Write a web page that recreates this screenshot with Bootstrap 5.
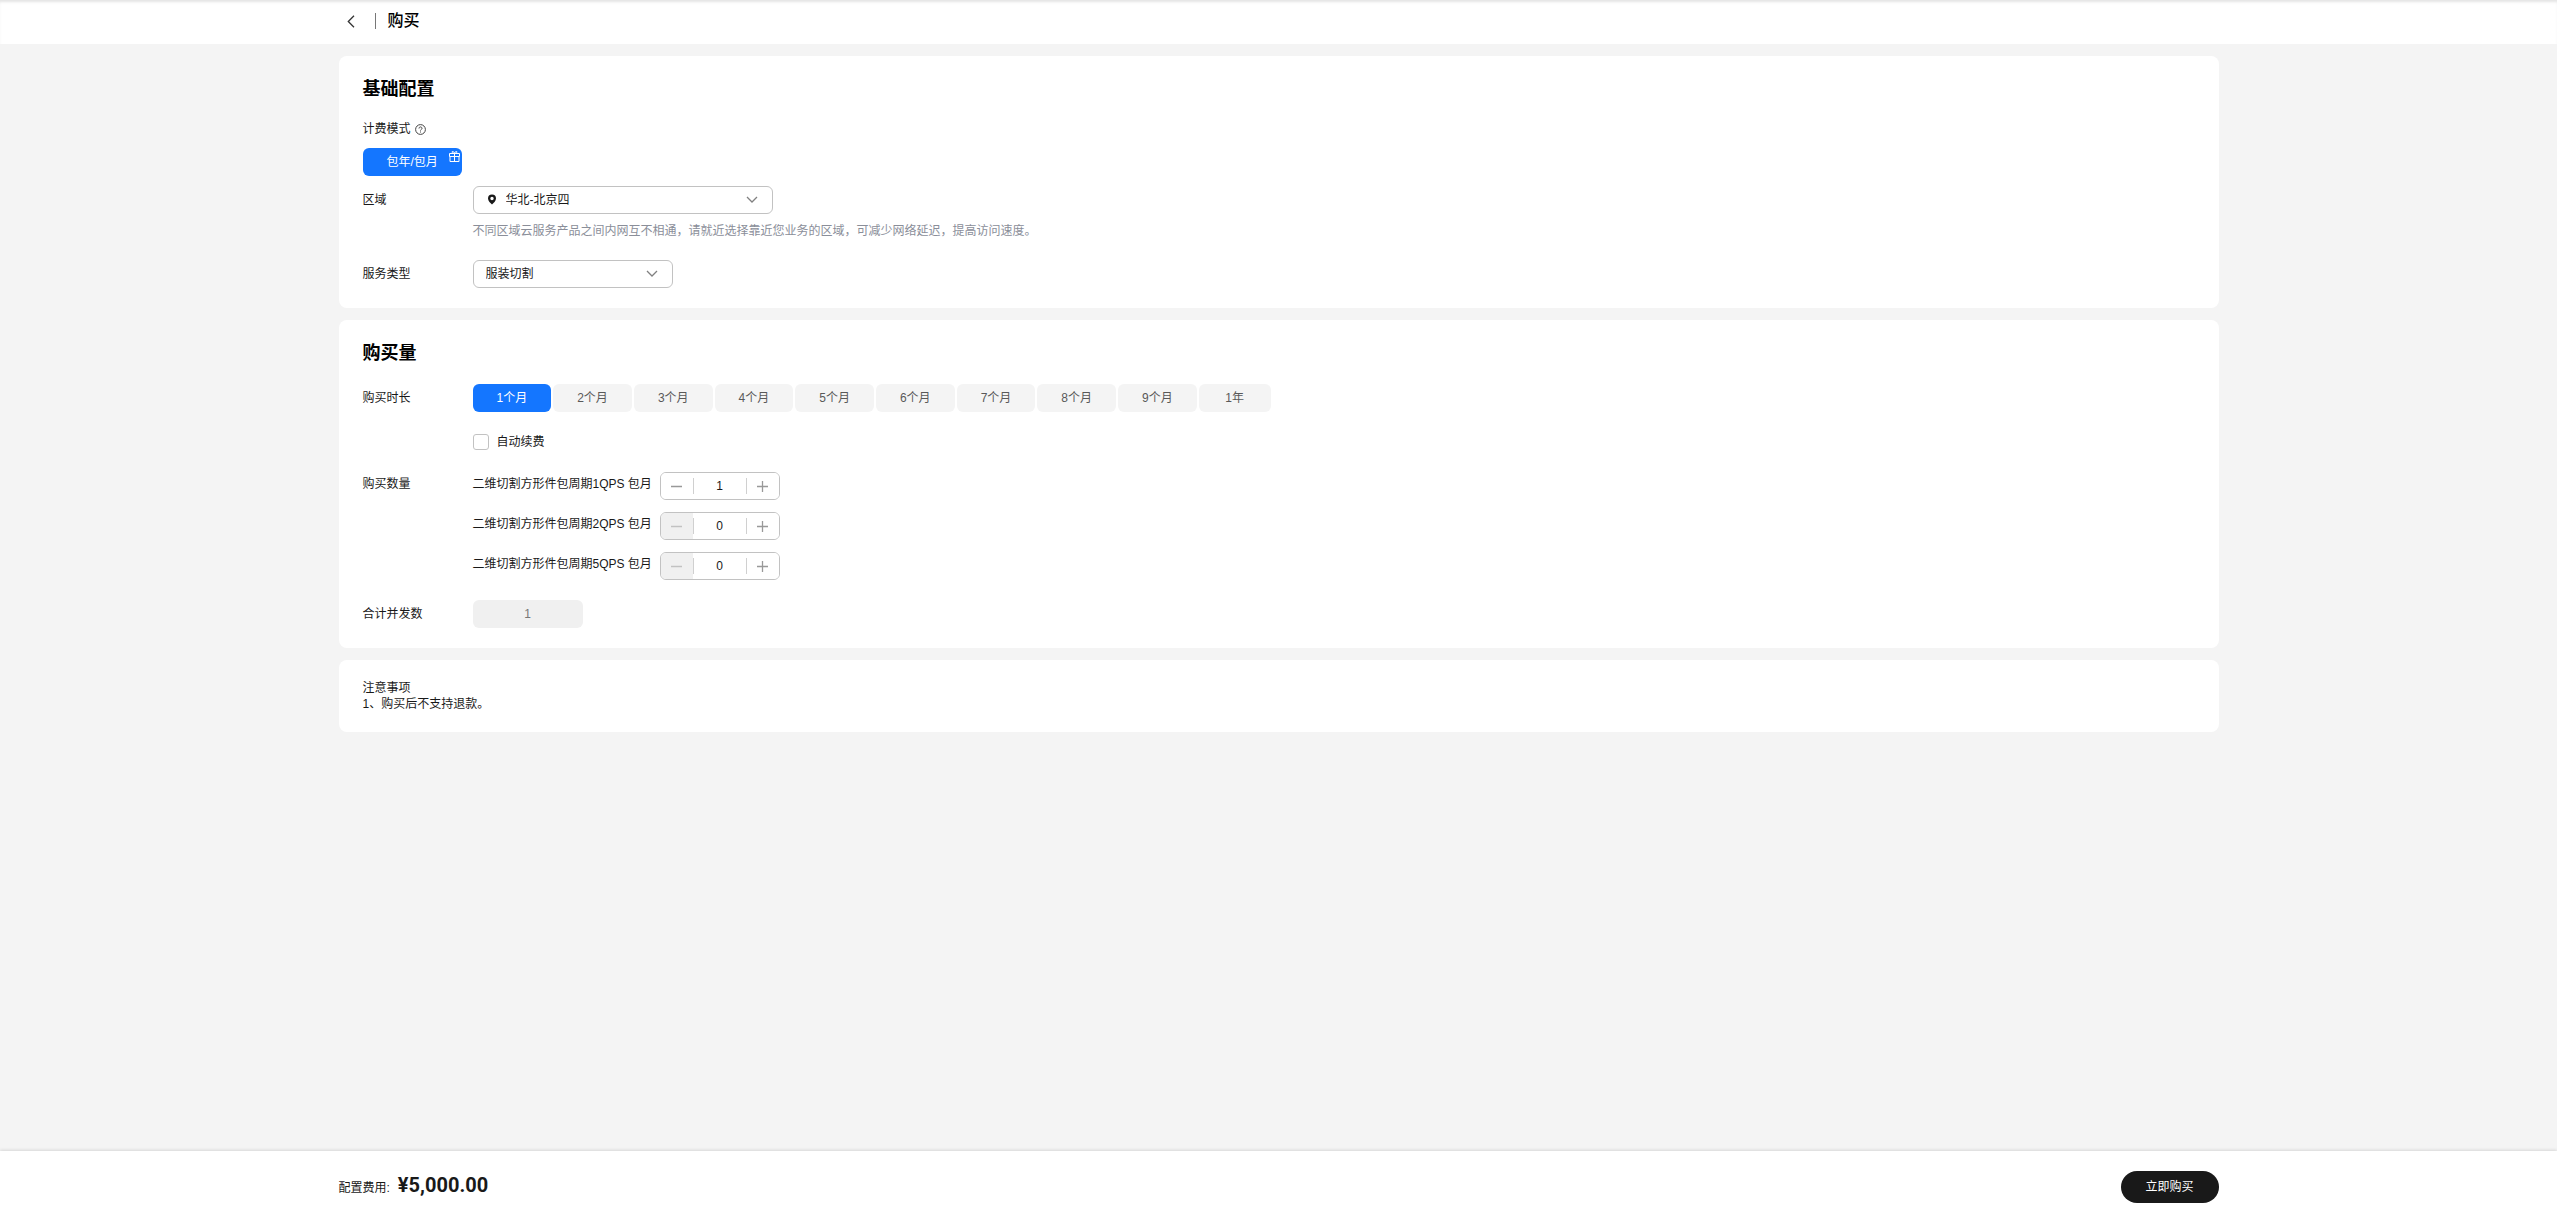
<!DOCTYPE html>
<html lang="zh-CN">
<head>
<meta charset="utf-8">
<meta name="viewport" content="width=device-width, initial-scale=1">
<title>购买</title>
<link href="https://cdn.jsdelivr.net/npm/bootstrap@5.3.0/dist/css/bootstrap.min.css" rel="stylesheet">
<style>
  body { font-family: "Liberation Sans", "Noto Sans CJK SC", sans-serif; font-size: 12px; line-height: 16px; color: #191919; background: #f4f4f4; }
  .page-wrap { width: 100%; max-width: 1880px; margin: 0 auto; }
  .top-bar { padding: 9px 0 11px; box-shadow: inset 0 3px 3px -1px #e4e4e4; }
  .top-bar h1 { font-size: 16px; line-height: 24px; font-weight: 500; color: #000; }
  .back-link { color: #333; width: 24px; height: 24px; }
  .bar-sep { width: 1px; height: 16px; background: #777; margin: 0 12px; }
  .panels { gap: 12px; padding: 12px 0; }
  .panel { background: #fff; border-radius: 8px; padding: 20px 24px; }
  .panel h2 { font-size: 18px; line-height: 26px; font-weight: 700; color: #000; margin: 0 0 18px; }
  .bill-label { line-height: 18px; margin-bottom: 10px; }
  .gap-block { margin-top: 20px; }
  .gap-tight { margin-top: 10px; }
  .line-label { width: 110px; flex: none; line-height: 28px; }
  .label-qty { line-height: 24px; }
  .pill { height: 28px; border: 0; border-radius: 6px; padding: 0 24px; min-width: 72px; background: #f4f4f4; color: #595959; line-height: 28px; }
  .pill.on { background: #1476ff; color: #fff; }
  .pill-group { gap: 2px; }
  .gift { position: absolute; top: 3px; right: 2px; }
  .pick { position: relative; max-width: 100%; }
  .pick select { appearance: none; width: 100%; height: 28px; border: 1px solid #c2c2c2; border-radius: 6px; background: #fff; color: #191919; padding: 0 32px 0 12px; }
  .pick .chev { position: absolute; right: 15px; top: 8px; pointer-events: none; }
  .pick .pin { position: absolute; left: 14px; top: 8px; pointer-events: none; }
  .pick-region { width: 300px; }
  .pick-region select { padding-left: 32px; }
  .pick-type { width: 200px; }
  .hint { color: #8a8e99; line-height: 18px; margin-top: 8px; }
  .renew { height: 20px; gap: 8px; }
  .tick { appearance: none; width: 16px; height: 16px; border: 1px solid #c2c2c2; border-radius: 3px; background: #fff; margin: 0; }
  .tick:checked { background: #1476ff; border-color: #1476ff; }
  .qty-list { gap: 12px; }
  .qty-label { width: 187px; line-height: 24px; }
  .stepper { width: 120px; height: 28px; border: 1px solid #c2c2c2; border-radius: 6px; overflow: hidden; }
  .stepper button { width: 32px; border: 0; padding: 0; background: #fff; color: #999; }
  .stepper button:disabled { background: #f0f0f0; color: #c2c2c2; }
  .stepper input { flex: 1; min-width: 0; border: 0; padding: 0; text-align: center; color: #191919; background: linear-gradient(#d0d0d0, #d0d0d0) left center / 1px 16px no-repeat, linear-gradient(#d0d0d0, #d0d0d0) right center / 1px 16px no-repeat; }
  .total { width: 110px; height: 28px; border: 0; border-radius: 6px; background: #f0f0f0; color: #777; text-align: center; }
  .pay-bar { padding: 20px 0 17px; box-shadow: 0 -1px 3px rgba(0,0,0,.12); }
  .cost { gap: 8px; line-height: 28px; }
  .price { font-size: 20px; font-weight: 700; font-family: Roboto, "Liberation Sans", sans-serif; }
  .buy { width: 98px; height: 32px; border: 0; border-radius: 16px; background: #191919; color: #fff; }
</style>
<script src="https://cdn.jsdelivr.net/npm/bootstrap@5.3.0/dist/js/bootstrap.bundle.min.js"></script>
</head>
<body>
<div class="d-flex flex-column min-vh-100">
  <header class="top-bar bg-white">
    <div class="page-wrap d-flex align-items-center">
      <a href="#" class="back-link d-flex align-items-center justify-content-center" aria-label="返回">
        <svg width="8" height="13" viewBox="0 0 8 13" fill="none" stroke="currentColor" stroke-width="1.3"><path d="M7 .8 1.3 6.5 7 12.2"/></svg>
      </a>
      <span class="bar-sep"></span>
      <h1 class="m-0">购买</h1>
    </div>
  </header>

  <main class="page-wrap panels d-flex flex-column flex-grow-1">
    <section class="panel">
      <h2>基础配置</h2>
      <div class="bill-label d-flex align-items-center gap-1">计费模式
        <svg width="11" height="11" viewBox="0 0 11 11" fill="none" stroke="#444"><circle cx="5.5" cy="5.5" r="4.9"/><path d="M4 4.500c0-2.100 3-2.100 3 0 0 1-1.500 1-1.500 2M5.500 7.500v1"/></svg>
      </div>
      <button type="button" class="pill on position-relative d-block">包年/包月
        <svg class="gift" width="11" height="11" viewBox="0 0 11 11" fill="none" stroke="#fff"><path d="M.5 2.500h10v3H.5zM1 5.500v5h9v-5M5.500 2.500v8M5.500 2.500C3 2.500 2.500.5 3.500.5s2 1 2 2c0-1 1-2 2-2s.5 2-2 2"/></svg>
      </button>
      <div class="d-flex align-items-start gap-tight">
        <label class="line-label" for="region">区域</label>
        <div>
          <div class="pick pick-region">
            <select id="region"><option>华北-北京四</option></select>
            <svg class="pin" width="10" height="11" viewBox="0 0 10 11"><path fill="#191919" fill-rule="evenodd" d="M5 .5a4 4 0 0 1 4 4C9 7 6.500 9 5 10.500 3.500 9 1 7 1 4.500a4 4 0 0 1 4-4zM5 2.800a1.700 1.700 0 1 0 0 3.400 1.700 1.700 0 0 0 0-3.400z"/></svg>
            <svg class="chev" width="12" height="11" viewBox="0 0 12 11" fill="none" stroke="#808080" stroke-width="1.300"><path d="M1 3l5 5 5-5"/></svg>
          </div>
          <div class="hint">不同区域云服务产品之间内网互不相通，请就近选择靠近您业务的区域，可减少网络延迟，提高访问速度。</div>
        </div>
      </div>
      <div class="d-flex align-items-start gap-block">
        <label class="line-label" for="kind">服务类型</label>
        <div class="pick pick-type">
          <select id="kind"><option>服装切割</option></select>
          <svg class="chev" width="12" height="11" viewBox="0 0 12 11" fill="none" stroke="#808080" stroke-width="1.300"><path d="M1 3l5 5 5-5"/></svg>
        </div>
      </div>
    </section>

    <section class="panel">
      <h2>购买量</h2>
      <div class="d-flex align-items-start">
        <span class="line-label" id="term">购买时长</span>
        <div>
          <div class="pill-group d-flex flex-wrap" role="group" aria-labelledby="term">
            <button type="button" class="pill on">1个月</button>
            <button type="button" class="pill">2个月</button>
            <button type="button" class="pill">3个月</button>
            <button type="button" class="pill">4个月</button>
            <button type="button" class="pill">5个月</button>
            <button type="button" class="pill">6个月</button>
            <button type="button" class="pill">7个月</button>
            <button type="button" class="pill">8个月</button>
            <button type="button" class="pill">9个月</button>
            <button type="button" class="pill">1年</button>
          </div>
          <div class="renew d-flex align-items-center gap-block">
            <input type="checkbox" class="tick" id="renew">
            <label for="renew">自动续费</label>
          </div>
        </div>
      </div>
      <div class="d-flex align-items-start gap-block">
        <span class="line-label label-qty">购买数量</span>
        <div class="qty-list d-flex flex-column">
          <div class="d-flex align-items-start">
            <label class="qty-label" for="q1">二维切割方形件包周期1QPS 包月</label>
            <div class="stepper d-flex">
              <button type="button" class="d-flex align-items-center justify-content-center" aria-label="减少"><svg width="11" height="11" viewBox="0 0 11 11" stroke="currentColor" stroke-width="1.300"><path d="M0 5.500h11"/></svg></button>
              <input type="text" id="q1" value="1">
              <button type="button" class="d-flex align-items-center justify-content-center" aria-label="增加"><svg width="11" height="11" viewBox="0 0 11 11" stroke="currentColor" stroke-width="1.300"><path d="M0 5.500h11M5.500 0v11"/></svg></button>
            </div>
          </div>
          <div class="d-flex align-items-start">
            <label class="qty-label" for="q2">二维切割方形件包周期2QPS 包月</label>
            <div class="stepper d-flex">
              <button type="button" disabled class="d-flex align-items-center justify-content-center" aria-label="减少"><svg width="11" height="11" viewBox="0 0 11 11" stroke="currentColor" stroke-width="1.300"><path d="M0 5.500h11"/></svg></button>
              <input type="text" id="q2" value="0">
              <button type="button" class="d-flex align-items-center justify-content-center" aria-label="增加"><svg width="11" height="11" viewBox="0 0 11 11" stroke="currentColor" stroke-width="1.300"><path d="M0 5.500h11M5.500 0v11"/></svg></button>
            </div>
          </div>
          <div class="d-flex align-items-start">
            <label class="qty-label" for="q5">二维切割方形件包周期5QPS 包月</label>
            <div class="stepper d-flex">
              <button type="button" disabled class="d-flex align-items-center justify-content-center" aria-label="减少"><svg width="11" height="11" viewBox="0 0 11 11" stroke="currentColor" stroke-width="1.300"><path d="M0 5.500h11"/></svg></button>
              <input type="text" id="q5" value="0">
              <button type="button" class="d-flex align-items-center justify-content-center" aria-label="增加"><svg width="11" height="11" viewBox="0 0 11 11" stroke="currentColor" stroke-width="1.300"><path d="M0 5.500h11M5.500 0v11"/></svg></button>
            </div>
          </div>
        </div>
      </div>
      <div class="d-flex align-items-start gap-block">
        <label class="line-label" for="sum">合计并发数</label>
        <input type="text" class="total" id="sum" value="1" disabled>
      </div>
    </section>

    <section class="panel">
      <div>注意事项</div>
      <div>1、购买后不支持退款。</div>
    </section>
  </main>

  <footer class="pay-bar bg-white">
    <div class="page-wrap d-flex align-items-start justify-content-between">
      <div class="cost d-flex align-items-baseline">
        <span>配置费用:</span>
        <span class="price">¥5,000.00</span>
      </div>
      <button type="button" class="buy">立即购买</button>
    </div>
  </footer>
</div>
</body>
</html>
